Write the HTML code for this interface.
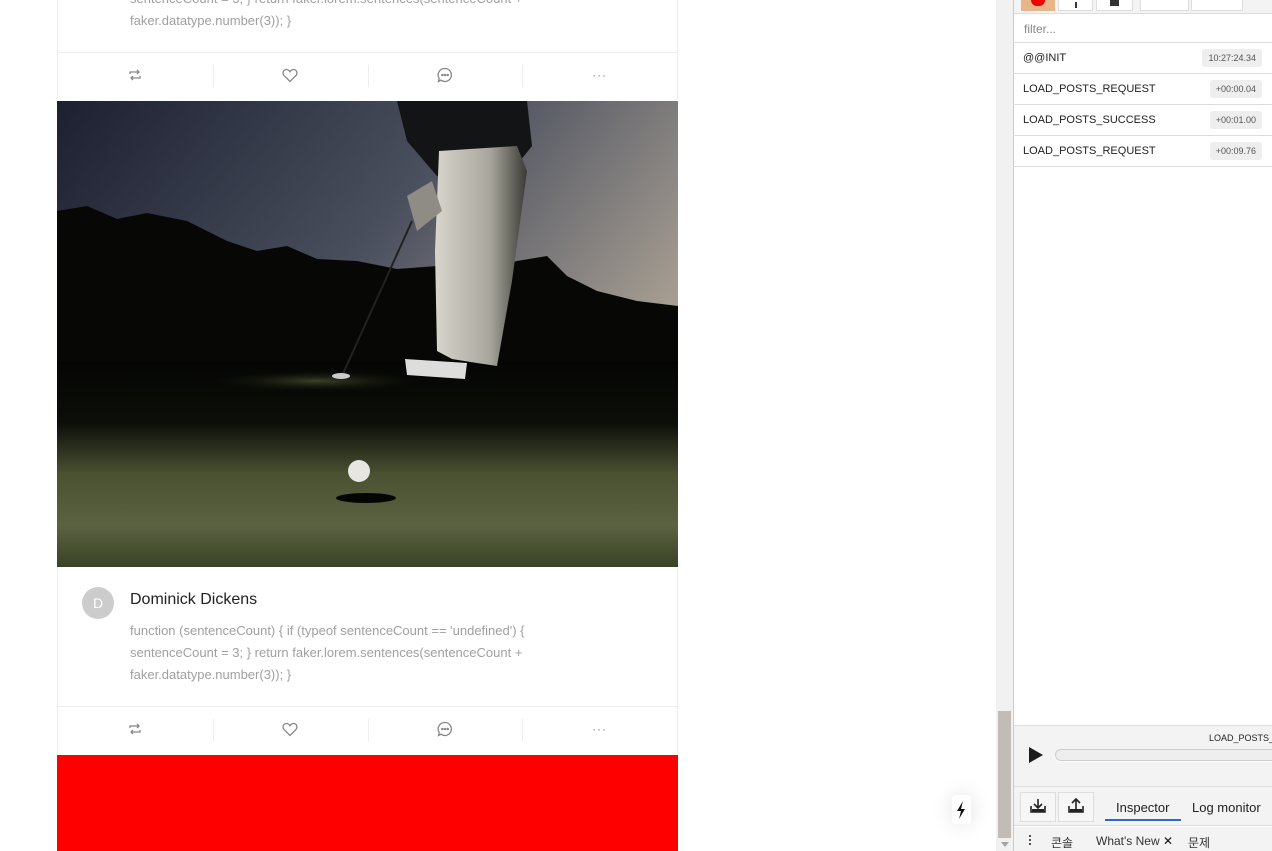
<!DOCTYPE html>
<html><head><meta charset="utf-8"><style>
*{margin:0;padding:0;box-sizing:border-box}
body{width:1272px;height:851px;overflow:hidden;background:#fff;font-family:"Liberation Sans","Noto Sans CJK KR",sans-serif;position:relative}
.abs{position:absolute}
.card{position:absolute;left:57px;width:621px;border-left:1px solid #ececec;border-right:1px solid #ececec;background:#fff}
.txt{font-size:13px;color:#a0a0a0;line-height:22px}
.bar{position:absolute;left:57px;width:621px;height:48px;border-top:1px solid #eee;border-left:1px solid #ececec;border-right:1px solid #ececec;display:flex;padding-bottom:3px}
.bar div{flex:1;display:flex;align-items:center;justify-content:center;position:relative}
.bar div+div:before{content:"";position:absolute;left:0;top:12px;height:22px;border-left:1px solid #eee}
.row{position:absolute;left:1013px;width:259px;height:31px;border-bottom:1px solid #ddd}
.row span{position:absolute;left:10px;top:9px;font-size:11px;color:#222}
.row b{position:absolute;right:10px;top:6px;font-weight:normal;font-size:9px;color:#555;background:#eee;border-radius:3px;padding:4px 6px}
</style></head><body>
<div class="card" style="top:0;height:53px">
<div class="txt abs" style="left:72px;top:-12px">sentenceCount = 3; } return faker.lorem.sentences(sentenceCount +</div>
<div class="txt abs" style="left:72px;top:10px">faker.datatype.number(3)); }</div>
</div>
<div class="bar" style="top:52px">
<div><svg width="14" height="12" viewBox="0 0 14 12" fill="none" stroke="#888" stroke-width="1.3"><path d="M2 5V3h9M9 1l2 2-2 2M12 7v2H3M5 11l-2-2 2-2"/></svg></div>
<div><svg width="16" height="15" viewBox="0 0 16 15" fill="none" stroke="#888" stroke-width="1.3"><path d="M8 13.5L2 7.5C0 5 1.5 1.5 4.5 1.5 6.3 1.5 7.3 2.7 8 3.7 8.7 2.7 9.7 1.5 11.5 1.5 14.5 1.5 16 5 14 7.5z"/></svg></div>
<div><svg width="16" height="16" viewBox="0 0 16 16" fill="none" stroke="#888" stroke-width="1.3"><path d="M8 1.5a6.5 6.5 0 1 1-4 11.7L1.5 14.5l.7-3A6.5 6.5 0 0 1 8 1.5z"/><circle cx="5.3" cy="8" r=".6" fill="#888"/><circle cx="8" cy="8" r=".6" fill="#888"/><circle cx="10.7" cy="8" r=".6" fill="#888"/></svg></div>
<div><span style="color:#888;font-size:12px;letter-spacing:1px">···</span></div>
</div>
<svg class="abs" style="left:57px;top:101px" width="621" height="466" viewBox="0 0 621 466">
<defs>
<linearGradient id="sky" x1="0" y1="0" x2="1" y2="0.6"><stop offset="0" stop-color="#1c2030"/><stop offset=".5" stop-color="#4a4f5e"/><stop offset="1" stop-color="#b8ad9c"/></linearGradient>
<linearGradient id="gr" x1="0" y1="0" x2="0" y2="1"><stop offset="0" stop-color="#050604"/><stop offset=".3" stop-color="#0c0e08"/><stop offset=".55" stop-color="#4a5232"/><stop offset=".8" stop-color="#5a6242"/><stop offset="1" stop-color="#3a4226"/></linearGradient>
<radialGradient id="spot" cx=".5" cy=".5" r=".5"><stop offset="0" stop-color="#3c4228"/><stop offset="1" stop-color="#000" stop-opacity="0"/></radialGradient>
<linearGradient id="pants" x1="0" y1="0" x2="1" y2="0"><stop offset="0" stop-color="#d8d6cc"/><stop offset=".6" stop-color="#a8a69c"/><stop offset="1" stop-color="#3a3a36"/></linearGradient>
</defs>
<rect width="621" height="466" fill="url(#sky)"/>
<path d="M0 110 L30 105 60 118 90 112 130 120 170 140 200 150 230 145 260 158 300 160 340 168 380 165 420 170 460 160 490 155 510 175 540 190 580 200 621 205 V300 H0z" fill="#070805"/>
<rect y="260" width="621" height="206" fill="url(#gr)"/>
<ellipse cx="260" cy="280" rx="120" ry="12" fill="url(#spot)"/>
<path d="M340 0 L470 0 475 45 455 70 440 60 400 80 380 75 350 40z" fill="#121416"/>
<path d="M382 50 L460 45 470 70 455 180 440 265 420 262 395 258 380 250 378 150z" fill="url(#pants)"/>
<path d="M350 95 L375 80 385 110 360 130z" fill="#8e8c84"/>
<path d="M355 120 L285 275" stroke="#222" stroke-width="2"/>
<path d="M348 258 L410 262 408 278 350 274z" fill="#ddd"/>
<ellipse cx="284" cy="275" rx="9" ry="3" fill="#ccc"/>
<ellipse cx="309" cy="397" rx="30" ry="5" fill="#050604"/>
<circle cx="302" cy="370" r="11" fill="#e8e6e0"/>
</svg>
<div class="card" style="top:567px;height:140px">
<div class="abs" style="left:24px;top:20px;width:32px;height:32px;border-radius:50%;background:#ccc;color:#fff;font-size:14px;text-align:center;line-height:32px">D</div>
<div class="abs" style="left:72px;top:24px;font-size:16px;color:#222">Dominick Dickens</div>
<div class="txt abs" style="left:72px;top:53px;width:500px">function (sentenceCount) { if (typeof sentenceCount == 'undefined') {<br>sentenceCount = 3; } return faker.lorem.sentences(sentenceCount +<br>faker.datatype.number(3)); }</div>
</div>
<div class="bar" style="top:706px">
<div><svg width="14" height="12" viewBox="0 0 14 12" fill="none" stroke="#888" stroke-width="1.3"><path d="M2 5V3h9M9 1l2 2-2 2M12 7v2H3M5 11l-2-2 2-2"/></svg></div>
<div><svg width="16" height="15" viewBox="0 0 16 15" fill="none" stroke="#888" stroke-width="1.3"><path d="M8 13.5L2 7.5C0 5 1.5 1.5 4.5 1.5 6.3 1.5 7.3 2.7 8 3.7 8.7 2.7 9.7 1.5 11.5 1.5 14.5 1.5 16 5 14 7.5z"/></svg></div>
<div><svg width="16" height="16" viewBox="0 0 16 16" fill="none" stroke="#888" stroke-width="1.3"><path d="M8 1.5a6.5 6.5 0 1 1-4 11.7L1.5 14.5l.7-3A6.5 6.5 0 0 1 8 1.5z"/><circle cx="5.3" cy="8" r=".6" fill="#888"/><circle cx="8" cy="8" r=".6" fill="#888"/><circle cx="10.7" cy="8" r=".6" fill="#888"/></svg></div>
<div><span style="color:#888;font-size:12px;letter-spacing:1px">···</span></div>
</div>
<div class="abs" style="left:57px;top:755px;width:621px;height:96px;background:#f00"></div>
<div class="abs" style="left:952px;top:795px;width:19px;height:29px;background:#fff;border-radius:3px;box-shadow:0 0 20px rgba(0,0,0,.12)"><svg width="19" height="29" viewBox="0 0 19 29"><path d="M11 6L5 16h4l-2 8 6-10H9z" fill="#111"/></svg></div>
<div class="abs" style="left:996px;top:0;width:17px;height:851px;background:#f1f1f1"></div>
<div class="abs" style="left:998px;top:711px;width:13px;height:127px;background:#c1bdb6"></div>
<div class="abs" style="left:1001px;top:842px;width:0;height:0;border-left:4px solid transparent;border-right:4px solid transparent;border-top:5px solid #a3a3a3"></div>
<div class="abs" style="left:1013px;top:0;width:259px;height:851px;border-left:1px solid #ccc;background:#fff"></div>
<div class="abs" style="left:1014px;top:0;width:258px;height:14px;background:#f3f3f3;border-bottom:1px solid #ddd"></div>
<div class="abs" style="left:1021px;top:0;width:34px;height:11px;background:#e8b48a"><div style="margin:0 auto;width:14px;height:6px;background:#e00;border-radius:0 0 7px 7px"></div></div>
<div class="abs" style="left:1058px;top:0;width:35px;height:11px;border:1px solid #ddd;border-top:0;background:#fff"><div style="margin:2px auto;width:2px;height:6px;background:#333"></div></div>
<div class="abs" style="left:1096px;top:0;width:37px;height:11px;border:1px solid #ddd;border-top:0;background:#fff"><div style="margin:0 auto;width:9px;height:6px;background:#333"></div></div>
<div class="abs" style="left:1140px;top:0;width:49px;height:11px;border:1px solid #ddd;border-top:0;background:#fff"></div>
<div class="abs" style="left:1191px;top:0;width:52px;height:11px;border:1px solid #ddd;border-top:0;background:#fff"></div>
<div class="abs" style="left:1014px;top:14px;width:258px;height:29px;border-bottom:1px solid #ddd"><span style="position:absolute;left:10px;top:8px;font-size:12px;color:#888">filter...</span></div>
<div class="row" style="top:43px"><span>@@INIT</span><b>10:27:24.34</b></div>
<div class="row" style="top:74px"><span>LOAD_POSTS_REQUEST</span><b>+00:00.04</b></div>
<div class="row" style="top:105px"><span>LOAD_POSTS_SUCCESS</span><b>+00:01.00</b></div>
<div class="row" style="top:136px"><span>LOAD_POSTS_REQUEST</span><b>+00:09.76</b></div>
<div class="abs" style="left:1014px;top:725px;width:258px;height:62px;background:#f3f3f3;border-top:1px solid #ddd;border-bottom:1px solid #ddd"></div>
<div class="abs" style="left:1209px;top:733px;font-size:9px;color:#222;white-space:nowrap">LOAD_POSTS_</div>
<div class="abs" style="left:1029px;top:747px;width:0;height:0;border-top:8px solid transparent;border-bottom:8px solid transparent;border-left:14px solid #1a1a1a"></div>
<div class="abs" style="left:1055px;top:749px;width:230px;height:12px;border:1px solid #ccc;border-radius:6px;background:#eee;box-shadow:0 1px 0 #fff"></div>
<div class="abs" style="left:1014px;top:787px;width:258px;height:39px;background:#f3f3f3;border-bottom:1px solid #ddd"></div>
<div class="abs" style="left:1020px;top:792px;width:36px;height:30px;border:1px solid #ddd;background:#f6f6f6"><svg width="34" height="28" viewBox="0 0 34 28"><path d="M10 13v6h14v-6M17 6v9M13 11l4 4 4-4" stroke="#222" stroke-width="1.6" fill="none"/><rect x="11" y="16" width="12" height="3" fill="#222"/></svg></div>
<div class="abs" style="left:1058px;top:792px;width:36px;height:30px;border:1px solid #ddd;background:#f6f6f6"><svg width="34" height="28" viewBox="0 0 34 28"><path d="M10 13v6h14v-6M17 16V6M13 10l4-4 4 4" stroke="#222" stroke-width="1.6" fill="none"/><rect x="11" y="16" width="12" height="3" fill="#222"/></svg></div>
<div class="abs" style="left:1116px;top:800px;font-size:13px;color:#222">Inspector</div>
<div class="abs" style="left:1105px;top:819px;width:76px;height:2px;background:#2a6ac8"></div>
<div class="abs" style="left:1192px;top:800px;font-size:13px;color:#222">Log monitor</div>
<div class="abs" style="left:1014px;top:827px;width:258px;height:24px;background:#f3f3f3"></div>
<div class="abs" style="left:1029px;top:835px;width:2px;height:2px;background:#555;box-shadow:0 4px 0 #555,0 8px 0 #555"></div>
<div class="abs" style="left:1051px;top:834px;font-size:12px;color:#333">콘솔</div>
<div class="abs" style="left:1096px;top:834px;font-size:12px;color:#333">What's New <span style="color:#111">✕</span></div>
<div class="abs" style="left:1188px;top:834px;font-size:12px;color:#333">문제</div>
</body></html>
